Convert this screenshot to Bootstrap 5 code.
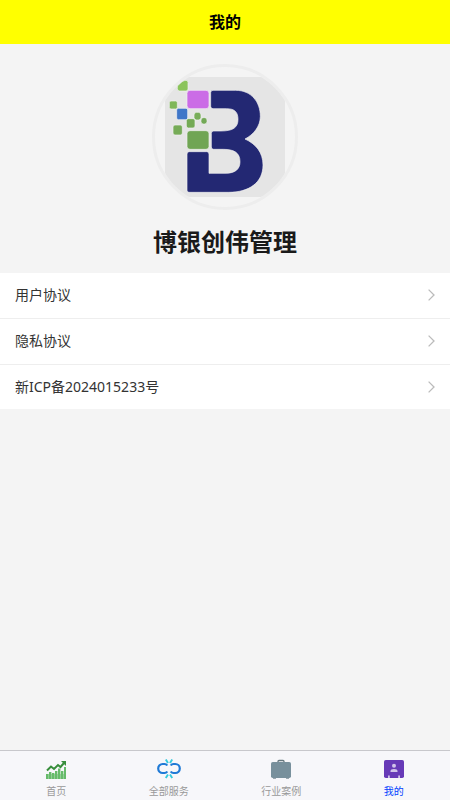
<!DOCTYPE html>
<html lang="zh-CN">
<head>
<meta charset="utf-8">
<meta name="viewport" content="width=device-width, initial-scale=1">
<title>我的</title>
<link rel="stylesheet" href="https://cdn.jsdelivr.net/npm/bootstrap@5.3.0/dist/css/bootstrap.min.css">
<style>
body{font-family:"Noto Sans","Noto Sans CJK SC",sans-serif;background:#f4f4f4;color:#333}
.top-bar{background:#ff0;height:44px}
.top-bar h1{font-size:16px;line-height:24px;color:#000}
.profile{padding:20px 0 13px}
.avatar{width:146px;height:146px;border:3px solid #ededed}
.company{font-size:24px;line-height:36px;margin-top:14px;color:#1a1a1a}
.menu .list-group-item{font-size:14px;line-height:21px;padding:11px 15px 13px;border-color:#eee;color:#333}
.menu .list-group-item:last-child{border-bottom:0;padding-bottom:12px}
.tab-bar{background:#f7f7fa;border-top:1px solid #c8c8cc;height:50px}
.tab-bar a{font-size:10px;line-height:14px;color:#999;padding-top:6px}
.tab-bar a.active{color:#0040ff}
.tab-bar svg{margin-bottom:3px}
</style>
<script src="https://cdn.jsdelivr.net/npm/bootstrap@5.3.0/dist/js/bootstrap.bundle.min.js"></script>
</head>
<body class="d-flex flex-column min-vh-100">
<header class="top-bar d-flex align-items-center justify-content-center"><h1 class="m-0 fw-bold">我的</h1></header>
<main class="flex-grow-1">
<section class="profile d-flex flex-column align-items-center">
<svg class="avatar rounded-circle" viewBox="30 36 420 420" role="img" aria-label="博银创伟管理">
<path d="M60 66H420V426H60z" fill="#e5e5e5"/>
<g stroke="#f3f3f3" stroke-width="2">
<g fill="#232873">
<path d="M204 106H272C319 106 346 141 346 184C346 215 325 239 300 252C333 267 354 293 354 330C354 382 314 412 250 412H132Q126 412 126 406V297Q126 290 133 290H185Q192 290 192 297V355H240C270 355 285 343 285 320C285 293 267 283 235 283H206Q199 283 199 276V235Q199 228 206 228H228C264 228 279 218 279 193C279 170 268 161 244 161H204Q197 161 197 154V113Q197 106 204 106z"/>
</g>
<rect x="126" y="106" width="66" height="55" rx="9" fill="#cb6ce6"/>
<rect x="126" y="227" width="66" height="56" rx="9" fill="#70a554"/>
<path d="M97 93L111 80Q118 76 123 76Q129 76 129 82V102Q129 108 123 108H104Q97 108 97 101z" fill="#8bc45b"/>
<rect x="73" y="138" width="24" height="24" rx="5" fill="#7fb75a"/>
<rect x="95" y="160" width="33" height="34" rx="5" fill="#3f76c8"/>
<rect x="147" y="172" width="21" height="23" rx="8" fill="#78ad59"/>
<rect x="168" y="188" width="18" height="19" rx="7" fill="#73a957"/>
<rect x="124" y="191" width="26" height="28" rx="6" fill="#74aa55"/>
<rect x="84" y="210" width="28" height="30" rx="6" fill="#76ab57"/>
</g>
</svg>
<h2 class="company fw-bold mb-0">博银创伟管理</h2>
</section>
<nav class="menu list-group list-group-flush" aria-label="协议">
<a href="#" class="list-group-item d-flex justify-content-between align-items-center">用户协议<svg width="7" height="12" viewBox="0 0 7 12" fill="none" stroke="#bbb" stroke-width="1.3" aria-hidden="true"><path d="M.6.6 6 6 .6 11.4"/></svg></a>
<a href="#" class="list-group-item d-flex justify-content-between align-items-center">隐私协议<svg width="7" height="12" viewBox="0 0 7 12" fill="none" stroke="#bbb" stroke-width="1.3" aria-hidden="true"><path d="M.6.6 6 6 .6 11.4"/></svg></a>
<a href="#" class="list-group-item d-flex justify-content-between align-items-center">新ICP备2024015233号<svg width="7" height="12" viewBox="0 0 7 12" fill="none" stroke="#bbb" stroke-width="1.3" aria-hidden="true"><path d="M.6.6 6 6 .6 11.4"/></svg></a>
</nav>
</main>
<nav class="tab-bar d-flex sticky-bottom" aria-label="主导航">
<a href="#" class="col d-flex flex-column align-items-center text-decoration-none">
<svg width="24" height="24" viewBox="0 0 24 24" aria-hidden="true"><path d="M2 17h2.400v5H2zM5 15h2.400v7H5zM8 16h2.400v6H8zM11 14h2.400v8H11zM14 11.500h2.400V22H14zM17 14h2.400v8H17zM20 10h2v12h-2z" fill="#66bb6a"/><path d="M2 17h20v5H2z" fill="#66bb6a" opacity=".5"/><path d="M3 13.500 7 9.500l3 2.500 4-4 2.500 2L20 6" fill="none" stroke="#388e3c" stroke-width="2"/><path d="M17 4h5v5z" fill="#388e3c"/></svg>首页</a>
<a href="#" class="col d-flex flex-column align-items-center text-decoration-none">
<svg width="24" height="24" viewBox="0 0 24 24" fill="none" aria-hidden="true"><path d="M10.300 8.500Q9.300 7 7.500 7H5.700a4.500 4.500 0 0 0 0 9h1.800q1.800 0 2.800-1.500M13.700 8.500Q14.700 7 16.500 7h1.800a4.500 4.500 0 0 1 0 9h-1.800q-1.800 0-2.800-1.500" stroke="#1f7ad6" stroke-width="2.200"/><path d="M11 6 8.800 2.500M13 6l2.200-3.500M11 17.500l-2.200 3.500M13 17.500l2.200 3.500" stroke="#35cadd" stroke-width="1.900"/></svg>全部服务</a>
<a href="#" class="col d-flex flex-column align-items-center text-decoration-none">
<svg width="24" height="24" viewBox="0 0 24 24" aria-hidden="true"><path d="M9 6V4.500Q9 3.500 10 3.500h4q1 0 1 1V6" fill="none" stroke="#66787f" stroke-width="1.300"/><path d="M4 20h3v1.600H4zM17 20h3v1.600h-3z" fill="#455a64"/><rect x="2" y="5" width="20" height="16" rx="1.800" fill="#78909c"/></svg>行业案例</a>
<a href="#" class="active col d-flex flex-column align-items-center text-decoration-none" aria-current="page">
<svg width="24" height="24" viewBox="0 0 24 24" aria-hidden="true"><rect x="2" y="3" width="20" height="18" rx="1.800" fill="#673ab7"/><g fill="#d1c4e9"><circle cx="12" cy="8.700" r="2"/><path d="M8.500 15v-1q0-2 3.500-2t3.500 2v1zM6 18.500h1.800V21H6zM16.200 18.500H18V21h-1.800z"/></g></svg>我的</a>
</nav>
</body>
</html>
